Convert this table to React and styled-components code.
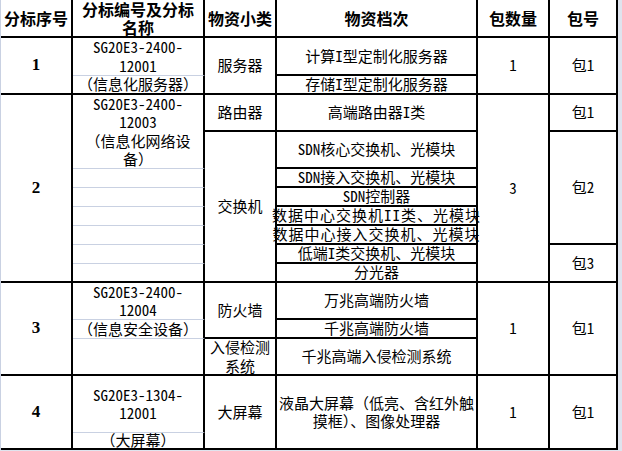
import React from "react";
import styled, { createGlobalStyle } from "styled-components";

const Global = createGlobalStyle`
  html, body { margin: 0; padding: 0; background: #dfe4ee; }
  body { font-family: "Noto Sans Mono CJK SC", "Noto Sans CJK SC", sans-serif; color: #000; }
`;

const Sheet = styled.div`
  display: grid;
  grid-template-columns: 72px 132px 72px 201px 72px 68px;
  grid-template-rows: 38px 38px 19px 37px 37px 19px 19px 19px 19px 19px 19px 37px 19px 37px 57px 17px;
  width: max-content;
  background: #fff;
  border-left: 1px solid #c9d1e2;
`;

const Cell = styled.div`
  grid-column: ${(p) => p.$col};
  grid-row: ${(p) => p.$row};
  box-sizing: border-box;
  display: flex;
  align-items: center;
  justify-content: center;
  text-align: center;
  white-space: nowrap;
  border-right: 2px solid #000;
  border-bottom: ${(p) => (p.$soft ? "1px solid #c9d1e2" : "2px solid #000")};
  font-size: 15px;
  letter-spacing: ${(p) => (p.$wide ? "1px" : "0")};
  line-height: 18.5px;
  overflow: visible;
`;

const HeadCell = styled(Cell)`
  font-size: 16px;
  font-weight: 700;
  line-height: 18px;
`;

const IndexCell = styled(Cell)`
  font-family: "Liberation Serif", serif;
  font-weight: 700;
  font-size: 17px;
`;

const br = (s) =>
  s.split("\n").map((l, i, a) => (
    <React.Fragment key={i}>
      {l}
      {i < a.length - 1 && <br />}
    </React.Fragment>
  ));

const heads = ["分标序号", "分标编号及分标\n名称", "物资小类", "物资档次", "包数量", "包号"];

const indexes = [
  ["1", "2 / 4"],
  ["2", "4 / 12"],
  ["3", "12 / 15"],
  ["4", "15 / 17"],
];

const codes = [
  ["SG20E3-2400-\n12001", "2", true],
  ["（信息化服务器）", "3", false],
  ["SG20E3-2400-\n12003\n（信息化网络设\n备）", "4 / 6", true],
  ["", "6", true],
  ["", "7", true],
  ["", "8", true],
  ["", "9", true],
  ["", "10", true],
  ["", "11", false],
  ["SG20E3-2400-\n12004", "12", true],
  ["（信息安全设备）", "13", true],
  ["", "14", false],
  ["SG20E3-1304-\n12001", "15", true],
  ["（大屏幕）", "16", false],
];

const kinds = [
  ["服务器", "2 / 4"],
  ["路由器", "4 / 5"],
  ["交换机", "5 / 12"],
  ["防火墙", "12 / 14"],
  ["入侵检测\n系统", "14 / 15"],
  ["大屏幕", "15 / 17"],
];

const grades = [
  ["计算I型定制化服务器", "2"],
  ["存储I型定制化服务器", "3"],
  ["高端路由器I类", "4"],
  ["SDN核心交换机、光模块", "5"],
  ["SDN接入交换机、光模块", "6"],
  ["SDN控制器", "7"],
  ["数据中心交换机II类、光模块", "8", true],
  ["数据中心接入交换机、光模块", "9", true],
  ["低端I类交换机、光模块", "10"],
  ["分光器", "11"],
  ["万兆高端防火墙", "12"],
  ["千兆高端防火墙", "13"],
  ["千兆高端入侵检测系统", "14"],
  ["液晶大屏幕（低亮、含红外触\n摸框）、图像处理器", "15 / 17"],
];

const counts = [
  ["1", "2 / 4"],
  ["3", "4 / 12"],
  ["1", "12 / 15"],
  ["1", "15 / 17"],
];

const packs = [
  ["包1", "2 / 4"],
  ["包1", "4 / 5"],
  ["包2", "5 / 10"],
  ["包3", "10 / 12"],
  ["包1", "12 / 15"],
  ["包1", "15 / 17"],
];

export default function App() {
  return (
    <>
      <Global />
      <Sheet>
        {heads.map((h, i) => (
          <HeadCell key={h} $col={i + 1} $row="1">
            <span>{br(h)}</span>
          </HeadCell>
        ))}
        {indexes.map(([t, r]) => (
          <IndexCell key={t} $col="1" $row={r}>
            {t}
          </IndexCell>
        ))}
        {codes.map(([t, r, soft]) => (
          <Cell key={r} $col="2" $row={r} $soft={soft}>
            <span>{br(t)}</span>
          </Cell>
        ))}
        {kinds.map(([t, r]) => (
          <Cell key={r} $col="3" $row={r}>
            <span>{br(t)}</span>
          </Cell>
        ))}
        {grades.map(([t, r, wide]) => (
          <Cell key={r} $col="4" $row={r} $wide={wide}>
            <span>{br(t)}</span>
          </Cell>
        ))}
        {counts.map(([t, r]) => (
          <Cell key={r} $col="5" $row={r}>
            {t}
          </Cell>
        ))}
        {packs.map(([t, r]) => (
          <Cell key={r} $col="6" $row={r}>
            {t}
          </Cell>
        ))}
      </Sheet>
    </>
  );
}
